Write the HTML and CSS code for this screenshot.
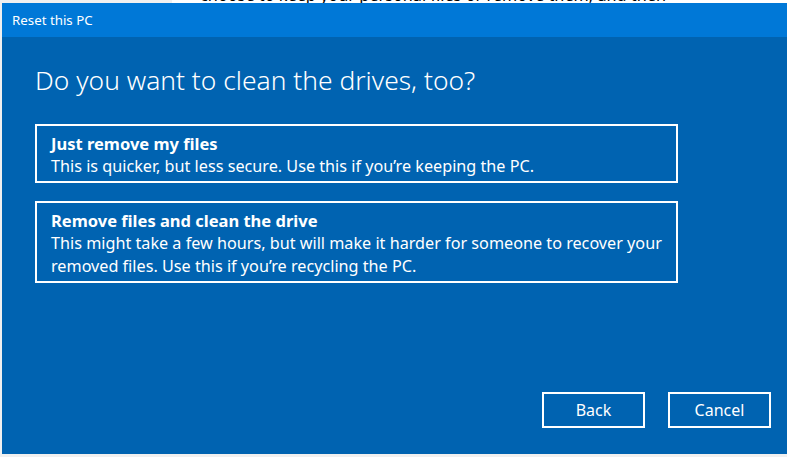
FILE: index.html
```html
<!DOCTYPE html>
<html>
<head>
<meta charset="utf-8">
<link rel="stylesheet" href="styles.css">
</head>
<body>
<div class="backdrop">
  <div class="backdrop-white">
    <p class="backdrop-text">choose to keep your personal files or remove them, and then</p>
  </div>
</div>
<div class="dialog">
  <div class="titlebar">Reset this PC</div>
  <div class="content">
    <h1 class="heading">Do you want to clean the drives, too?</h1>
    <div class="options">
      <div class="option">
        <div class="option-title">Just remove my files</div>
        <div class="option-desc">This is quicker, but less secure. Use this if you’re keeping the PC.</div>
      </div>
      <div class="option">
        <div class="option-title">Remove files and clean the drive</div>
        <div class="option-desc">This might take a few hours, but will make it harder for someone to recover your removed files. Use this if you’re recycling the PC.</div>
      </div>
    </div>
    <div class="actions">
      <button class="btn">Back</button>
      <button class="btn">Cancel</button>
    </div>
  </div>
</div>
</body>
</html>
```
FILE: styles.css
```css
html, body {
  margin: 0;
  padding: 0;
}
body {
  background: #f0f0f0;
  width: 787px;
  height: 457px;
  overflow: hidden;
  font-family: "Noto Sans", "Open Sans", sans-serif;
}
.backdrop {
  height: 3px;
  overflow: hidden;
  display: flex;
}
.backdrop-white {
  margin-left: 172px;
  flex: 1;
  background: #ffffff;
  overflow: hidden;
}
.backdrop-text {
  margin: -15px 0 0 28px;
  font-size: 16.3px;
  line-height: 20px;
  color: #000;
  white-space: nowrap;
}
.dialog {
  margin-left: 2px;
  width: 785px;
  height: 451px;
  background: #0063b1;
  display: flex;
  flex-direction: column;
  color: #fff;
}
.titlebar {
  height: 34px;
  background: #0078d7;
  padding-left: 10px;
  font-size: 13.3px;
  line-height: 34px;
  box-sizing: border-box;
}
.content {
  flex: 1;
  display: flex;
  flex-direction: column;
  padding: 0 16px 26px 33px;
}
.heading {
  margin: 25px 0 0 0;
  font-weight: 300;
  font-size: 26.4px;
  line-height: 36px;
}
.options {
  display: flex;
  flex-direction: column;
  gap: 18px;
  margin-top: 26px;
  width: 643px;
}
.option {
  border: 2px solid #fff;
  padding: 6px 8px 3px 14px;
  font-size: 16.2px;
  line-height: 23px;
}
.option-title {
  font-weight: 700;
  font-size: 16.5px;
}
.actions {
  margin-top: auto;
  display: flex;
  justify-content: flex-end;
  gap: 23px;
}
.btn {
  width: 103px;
  height: 36px;
  background: transparent;
  border: 2px solid #fff;
  color: #fff;
  font-family: inherit;
  font-size: 16px;
  padding: 0;
}
```
